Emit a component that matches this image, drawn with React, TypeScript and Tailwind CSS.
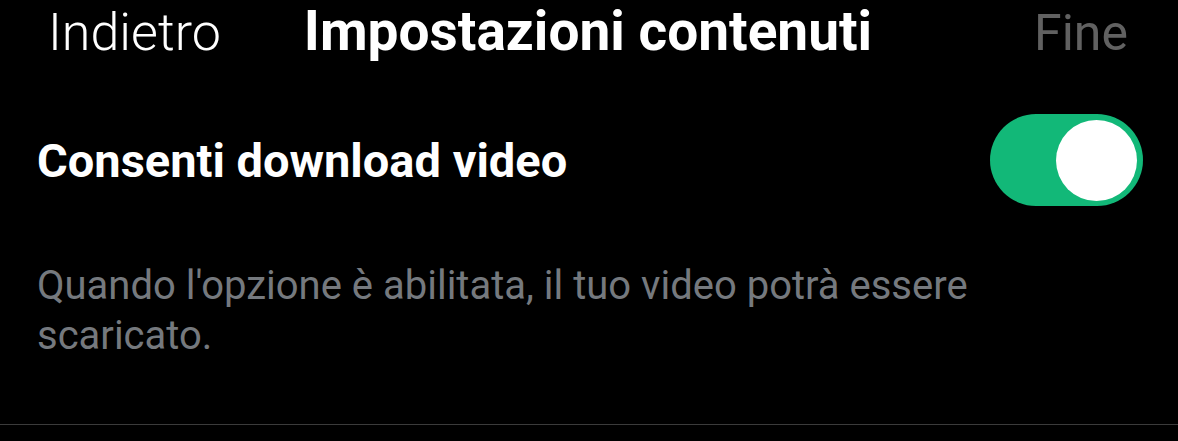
export default function App() {
  return (
    <div className="w-[1178px] h-[441px] bg-black text-white overflow-hidden font-['Roboto',sans-serif]">
      {/* Header */}
      <div className="grid grid-cols-[1fr_auto_1fr] items-baseline h-[60px] pl-[48px] pr-[50px] pt-[4px]">
        <span className="text-[52px] font-light leading-none justify-self-start">Indietro</span>
        <span className="text-[55px] font-bold leading-none">Impostazioni contenuti</span>
        <span className="text-[50px] font-normal leading-none text-[#616161] justify-self-end">Fine</span>
      </div>

      {/* Setting row */}
      <div className="flex items-center justify-between pl-[37px] pr-[35px] mt-[54px]">
        <span className="text-[47px] font-bold leading-none">Consenti download video</span>
        <div className="w-[153px] h-[92px] rounded-full bg-[#12b878] flex items-center justify-end pr-[6px]">
          <div className="w-[81px] h-[81px] rounded-full bg-white" />
        </div>
      </div>

      {/* Description */}
      <p className="pl-[37px] pr-[150px] mt-[55px] text-[40px] leading-[50px] text-[#75797e]">
        Quando l'opzione è abilitata, il tuo video potrà essere scaricato.
      </p>

      <div className="mt-[63px] h-px bg-[#3b3b3b]" />
    </div>
  );
}
